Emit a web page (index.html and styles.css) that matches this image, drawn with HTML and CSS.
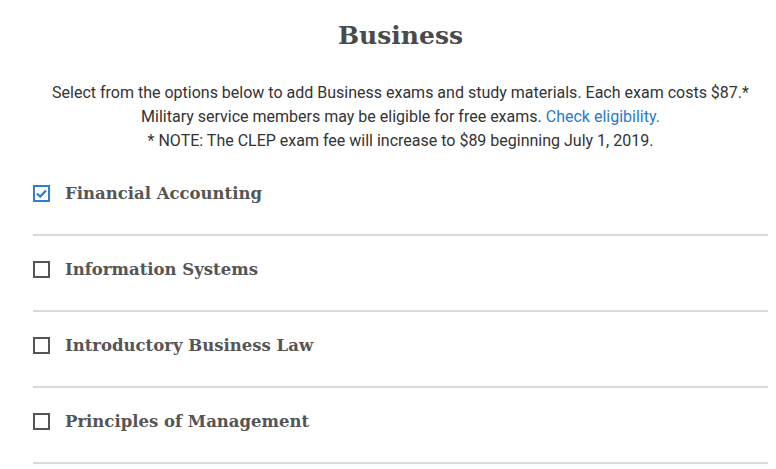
FILE: index.html
```
<!DOCTYPE html>
<html>
<head>
<meta charset="utf-8">
<title>Business</title>
<link rel="stylesheet" href="styles.css">
</head>
<body>
  <div class="wrap">
    <h2 class="titulo">Business</h2>
    <p class="intro">
      Select from the options below to add Business exams and study materials. Each exam costs $87.*<br>
      Military service members may be eligible for free exams. <a href="#" class="enlace">Check eligibility.</a><br>
      * NOTE: The CLEP exam fee will increase to $89 beginning July 1, 2019.
    </p>

    <ul class="lista">
      <li class="fila">
        <span class="caja marcada">
          <svg width="13" height="13" viewBox="0 0 13 13"><path d="M2 6.5 L5.2 9.6 L11 3.4" fill="none" stroke="#2f7fd6" stroke-width="2.2"/></svg>
        </span>
        <span class="nombre">Financial Accounting</span>
      </li>
      <li class="fila">
        <span class="caja"></span>
        <span class="nombre">Information Systems</span>
      </li>
      <li class="fila">
        <span class="caja"></span>
        <span class="nombre">Introductory Business Law</span>
      </li>
      <li class="fila">
        <span class="caja"></span>
        <span class="nombre">Principles of Management</span>
      </li>
    </ul>
  </div>
</body>
</html>
```

FILE: styles.css
```
body {
    margin: 0;
    background-color: #fff;
    font-family: Roboto, "Liberation Sans", sans-serif;
    color: #333;
}
.wrap {
    padding: 0 8px 0 33px;
}
.titulo {
    margin: 0;
    padding-top: 21px;
    height: 38px;
    text-align: center;
    font-family: "DejaVu Serif", serif;
    font-weight: bold;
    font-size: 25px;
    color: #4a4a4a;
}
.intro {
    margin: 22px 0 0 0;
    text-align: center;
    font-size: 16px;
    line-height: 24px;
    color: #333;
}
.enlace {
    color: #2a7ac8;
    text-decoration: none;
}
.lista {
    list-style: none;
    margin: 7px 0 0 0;
    padding: 0;
}
.fila {
    box-sizing: border-box;
    display: flex;
    align-items: center;
    gap: 15px;
    height: 76px;
    padding-bottom: 8px;
    border-bottom: 2px solid #dadada;
}
.caja {
    box-sizing: border-box;
    width: 17px;
    height: 17px;
    border: 2px solid #555;
    display: flex;
    align-items: center;
    justify-content: center;
}
.marcada {
    border-color: #2f7fd6;
}
.nombre {
    font-family: "DejaVu Serif", serif;
    font-size: 16.5px;
    font-weight: 600;
    color: #555;
}
```
